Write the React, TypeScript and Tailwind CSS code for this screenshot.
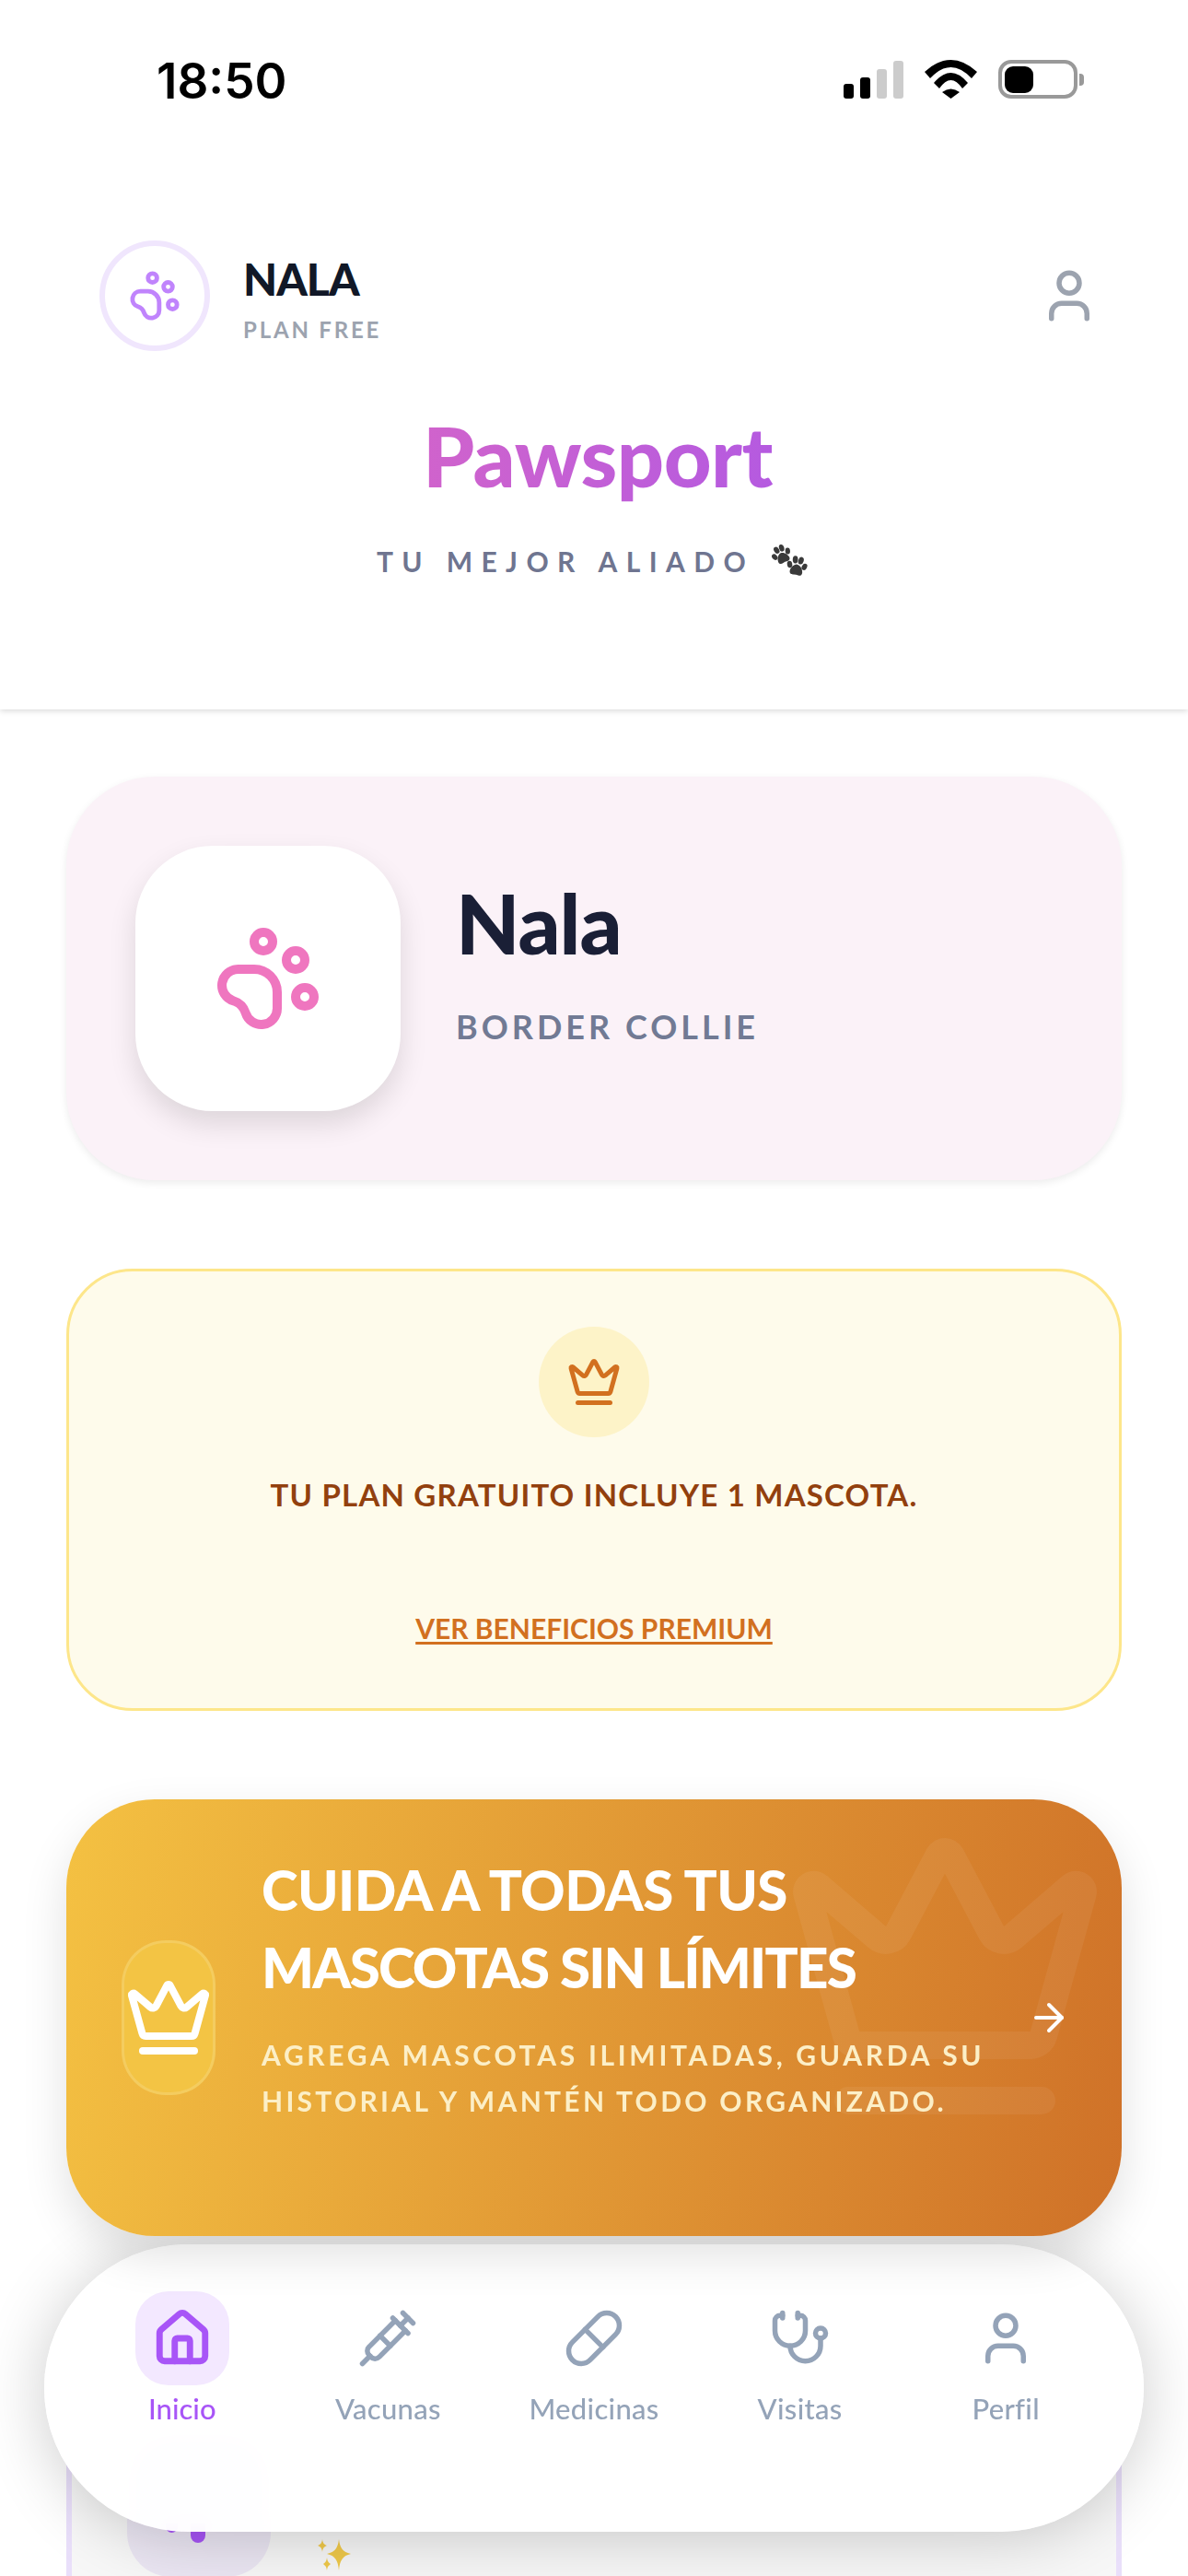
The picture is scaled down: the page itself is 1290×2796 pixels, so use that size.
import { ArrowRight, Crown, House, PawPrint, Pill, Stethoscope, Syringe, User } from "lucide-react";

const navItems = [
  { label: "Vacunas", icon: Syringe },
  { label: "Medicinas", icon: Pill },
  { label: "Visitas", icon: Stethoscope },
  { label: "Perfil", icon: User },
];

function StatusIcons() {
  return (
    <div className="flex items-end">
      <div className="flex items-end gap-[7px]">
        <div className="h-[16px] w-[11px] rounded-[3px] bg-black" />
        <div className="h-[23px] w-[11px] rounded-[3px] bg-black" />
        <div className="h-[32px] w-[11px] rounded-[3px] bg-[#cccccc]" />
        <div className="h-[41px] w-[11px] rounded-[3px] bg-[#cccccc]" />
      </div>
      <svg width="57" height="42" viewBox="0 0 57 42" className="ml-[23px]">
        <path d="M0 13Q28.5 -13 57 13L51 20Q28.5 -4 6 20Z" fill="#000" />
        <path d="M10 25Q28.5 3 47 25L41 31Q28.5 13 16 31Z" fill="#000" />
        <path d="M19 35Q28.5 28 38 35L28.5 42Z" fill="#000" />
      </svg>
      <div className="ml-[23px] flex h-[42px] w-[86px] items-center rounded-[14px] border-[4px] border-[#999999] pl-[3px]">
        <div className="h-[29px] w-[31px] rounded-[9px] bg-black" />
      </div>
      <div className="mb-[14px] ml-[2px] h-[13px] w-[5px] rounded-r-[4px] bg-[#999999]" />
    </div>
  );
}

function Paw({ className }: { className: string }) {
  return (
    <svg viewBox="0 0 20 20" className={className} fill="#3a3a3a">
      <ellipse cx="3.500" cy="9" rx="2.300" ry="3.100" transform="rotate(-20 3.500 9)" />
      <ellipse cx="7.800" cy="4" rx="2.400" ry="3.400" transform="rotate(-8 7.800 4)" />
      <ellipse cx="13" cy="4" rx="2.400" ry="3.400" transform="rotate(8 13 4)" />
      <ellipse cx="17" cy="9" rx="2.300" ry="3.100" transform="rotate(20 17 9)" />
      <path d="M10.200 8c3 0 5.800 4 5.800 6.800 0 2.400-1.800 3-3.200 2.700-1.600-.4-3.200-.4-4.800 0C6.600 17.800 4.600 17.200 4.600 14.800 4.600 12 7.300 8 10.200 8z" />
    </svg>
  );
}

function PawsEmoji() {
  return (
    <div className="relative ml-[18px] h-[36px] w-[40px]">
      <Paw className="absolute left-0 top-0 h-[23px] w-[23px] -rotate-[25deg]" />
      <Paw className="absolute bottom-0 right-0 h-[24px] w-[24px] rotate-[10deg]" />
    </div>
  );
}

function Sparkles() {
  return (
    <svg width="40" height="36" viewBox="0 0 40 36" fill="#f0c94a">
      <path d="M23 0C24 9 27 14 36 16C27 18 24 23 23 34C22 23 19 18 10 16C19 14 22 9 23 0Z" />
      <path d="M5 0C5.500 4 6.500 5.500 10 7C6.500 8.500 5.500 10 5 14C4.500 10 3.500 8.500 0 7C3.500 5.500 4.500 4 5 0Z" />
      <path d="M10 20C10.500 24 11.500 25 14 27C11.500 29 10.500 30 10 34C9.500 30 8.500 29 6 27C8.500 25 9.500 24 10 20Z" />
    </svg>
  );
}

export default function App() {
  return (
    <div className="relative h-[2796px] w-[1290px] overflow-hidden bg-white font-['Lato','Noto_Sans',sans-serif]">
      <header className="h-[770px] bg-white shadow-[0_2px_6px_rgba(0,0,0,0.14)]">
        <div className="flex h-[261px] items-start justify-between pl-[170px] pr-[113px] pt-[58px]">
          <span className="font-['Inter',sans-serif] text-[53px] font-semibold leading-[60px] text-black">18:50</span>
          <div className="pt-[7px]">
            <StatusIcons />
          </div>
        </div>

        <div className="flex items-center justify-between pl-[108px] pr-[96px]">
          <div className="flex items-center gap-[36px]">
            <div className="flex h-[120px] w-[120px] items-center justify-center rounded-full border-[6px] border-[#f0e6fd]">
              <PawPrint size={58} strokeWidth={2} className="text-[#c084fc]" />
            </div>
            <div className="mt-[6px] flex flex-col">
              <span className="text-[48px] font-black leading-[58px] tracking-[-1px] text-[#111827]">NALA</span>
              <span className="mt-[10px] text-[24px] font-bold leading-[32px] tracking-[2.8px] text-[#9ca3af]">PLAN FREE</span>
            </div>
          </div>
          <User size={66} strokeWidth={2} className="text-[#9ca3af]" />
        </div>

        <div className="mt-[59px] flex flex-col items-center pl-[8px]">
          <span className="bg-gradient-to-r from-[#d063cc] to-[#b55ae0] bg-clip-text text-[90px] font-black leading-[108px] tracking-[-0.5px] text-transparent">
            Pawsport
          </span>
          <div className="mt-[41px] flex items-center pr-[12px]">
            <span className="text-[30px] font-bold leading-[40px] tracking-[9.4px] text-[#6f7590]">TU MEJOR ALIADO</span>
            <PawsEmoji />
          </div>
        </div>
      </header>

      <main className="flex flex-col gap-[96px] px-[72px] pt-[73px]">
        <section className="flex items-center gap-[60px] rounded-[96px] bg-[#fbf2f8] p-[75px] shadow-[0_3px_8px_rgba(0,0,0,0.08)]">
          <div className="flex h-[288px] w-[288px] items-center justify-center rounded-[84px] bg-white shadow-[0_14px_30px_rgba(0,0,0,0.12)]">
            <PawPrint size={120} strokeWidth={2} className="text-[#ef76bf]" />
          </div>
          <div className="mb-[39px] flex flex-col">
            <span className="text-[90px] font-black leading-[108px] tracking-[-1px] text-[#1a1f36]">Nala</span>
            <span className="mt-[35px] text-[36px] font-bold leading-[48px] tracking-[4px] text-[#717a94]">BORDER COLLIE</span>
          </div>
        </section>

        <section className="flex h-[480px] flex-col items-center rounded-[72px] border-[3px] border-[#fde68a] bg-[#fefbeb] pt-[60px]">
          <div className="flex h-[120px] w-[120px] items-center justify-center rounded-full bg-[#fdf3c8]">
            <Crown size={60} strokeWidth={2} className="text-[#d2701f]" />
          </div>
          <p className="mt-[40px] text-[33px] font-bold leading-[44px] tracking-[1.2px] text-[#92400e]">
            TU PLAN GRATUITO INCLUYE 1 MASCOTA.
          </p>
          <a className="mt-[103px] text-[30px] font-bold leading-[40px] text-[#d2701f] underline underline-offset-[3px]">
            VER BENEFICIOS PREMIUM
          </a>
        </section>

        <section className="relative z-10 flex h-[474px] items-center overflow-hidden rounded-[96px] bg-[linear-gradient(100deg,#f4c142,#cf7128)] pl-[60px] pr-[55px] shadow-[0_20px_50px_rgba(0,0,0,0.12)]">
          <Crown size={360} strokeWidth={2} className="absolute right-[12px] top-[12px] text-white/[0.06]" />
          <div className="relative flex h-[168px] w-[102px] shrink-0 items-center justify-center rounded-[48px] border-[3px] border-white/15 bg-[#f3c444]">
            <Crown size={96} strokeWidth={2} className="shrink-0 text-white" />
          </div>
          <div className="relative mb-[66px] ml-[50px] w-[800px]">
            <h2 className="text-[60px] font-black leading-[84px] text-white">
              <span className="block tracking-[-0.6px]">CUIDA A TODAS TUS</span>
              <span className="block tracking-[-1.75px]">MASCOTAS SIN LÍMITES</span>
            </h2>
            <p className="mt-[28px] text-[30px] font-bold leading-[50px] text-[#fcefc7]">
              <span className="block tracking-[3.7px]">AGREGA MASCOTAS ILIMITADAS, GUARDA SU</span>
              <span className="block tracking-[3.3px]">HISTORIAL Y MANTÉN TODO ORGANIZADO.</span>
            </p>
          </div>
          <ArrowRight size={48} strokeWidth={2} className="relative ml-auto text-white" />
        </section>

        <section className="h-[500px] rounded-[72px] border-[6px] border-[#e9dffa] bg-[#f7f7f7] pl-[60px] pt-[112px]">
          <div className="flex items-start gap-[51px]">
            <div className="relative h-[156px] w-[156px] shrink-0 overflow-hidden rounded-[48px] bg-[#ebe6f3]">
              <div className="absolute left-[42px] top-[98px] h-[10px] w-[13px] rounded-b-full bg-[#a855f7]" />
              <div className="absolute left-[69px] top-[98px] h-[21px] w-[16px] rounded-b-full bg-[#a855f7]" />
            </div>
            <div className="pt-[115px]">
              <Sparkles />
            </div>
          </div>
        </section>
      </main>

      <nav className="absolute left-[48px] top-[2436px] h-[312px] w-[1194px] rounded-[156px] bg-white/95 px-[38px] pt-[51px] shadow-[0_6px_70px_rgba(0,0,0,0.2)] backdrop-blur-md">
        <div className="grid grid-cols-5">
          <div className="flex flex-col items-center">
            <div className="flex h-[102px] w-[102px] items-center justify-center rounded-[36px] bg-[#f3e8ff]">
              <House size={66} strokeWidth={2.5} className="text-[#a855f7]" />
            </div>
            <span className="mt-[3px] text-[31px] font-medium leading-[45px] text-[#a855f7]">Inicio</span>
          </div>
          {navItems.map((item) => (
            <div key={item.label} className="flex flex-col items-center">
              <div className="flex h-[102px] w-[102px] items-center justify-center">
                <item.icon size={66} strokeWidth={2} className="text-[#94a3b8]" />
              </div>
              <span className="mt-[3px] text-[31px] font-medium leading-[45px] tracking-[0.3px] text-[#94a3b8]">{item.label}</span>
            </div>
          ))}
        </div>
      </nav>
    </div>
  );
}
